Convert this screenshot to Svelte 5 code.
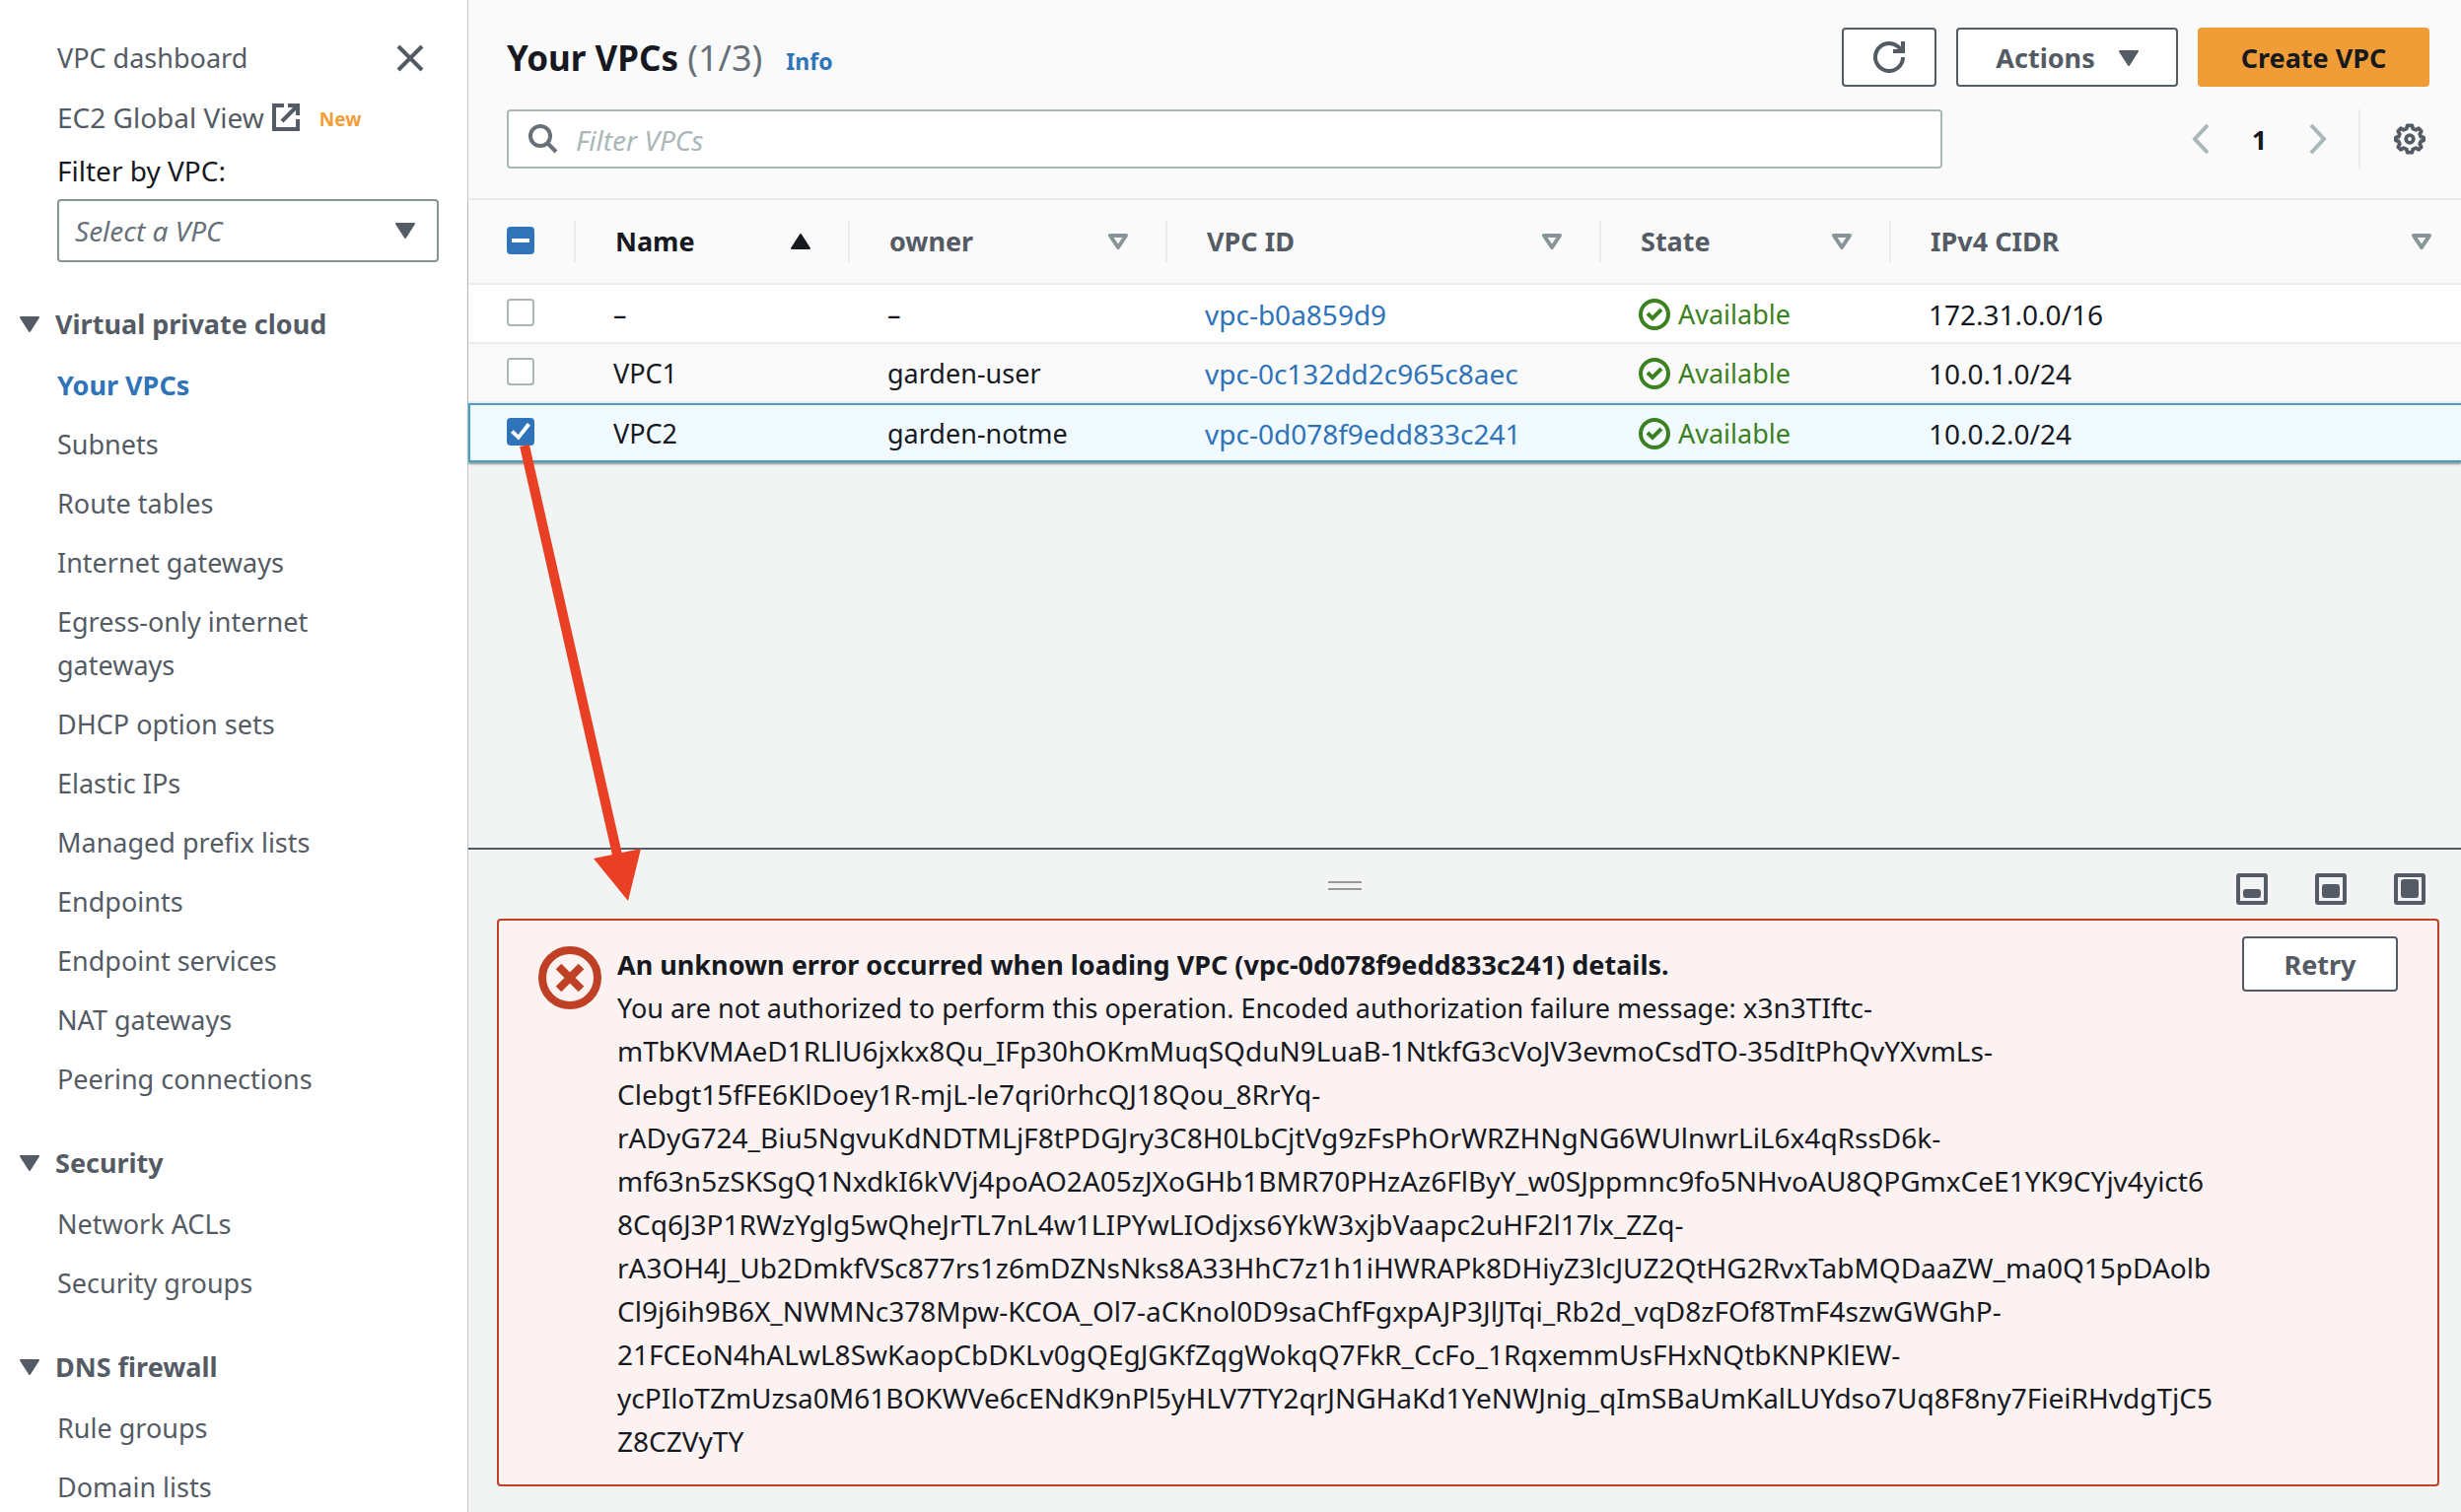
<script>
  const groups = [
    {
      title: 'Virtual private cloud',
      items: [
        'Your VPCs', 'Subnets', 'Route tables', 'Internet gateways',
        'Egress-only internet gateways', 'DHCP option sets', 'Elastic IPs',
        'Managed prefix lists', 'Endpoints', 'Endpoint services',
        'NAT gateways', 'Peering connections'
      ]
    },
    { title: 'Security', items: ['Network ACLs', 'Security groups'] },
    { title: 'DNS firewall', items: ['Rule groups', 'Domain lists'] }
  ];
  const columns = ['Name', 'owner', 'VPC ID', 'State', 'IPv4 CIDR'];
  let rows = $state([
    { name: '–', owner: '–', id: 'vpc-b0a859d9', cidr: '172.31.0.0/16', selected: false },
    { name: 'VPC1', owner: 'garden-user', id: 'vpc-0c132dd2c965c8aec', cidr: '10.0.1.0/24', selected: false },
    { name: 'VPC2', owner: 'garden-notme', id: 'vpc-0d078f9edd833c241', cidr: '10.0.2.0/24', selected: true }
  ]);
  const count = $derived(rows.filter((r) => r.selected).length);
  const encoded = [
    'x3n3TIftc-',
    'mTbKVMAeD1RLlU6jxkx8Qu_IFp30hOKmMuqSQduN9LuaB-1NtkfG3cVoJV3evmoCsdTO-35dItPhQvYXvmLs-',
    'Clebgt15fFE6KlDoey1R-mjL-le7qri0rhcQJ18Qou_8RrYq-',
    'rADyG724_Biu5NgvuKdNDTMLjF8tPDGJry3C8H0LbCjtVg9zFsPhOrWRZHNgNG6WUlnwrLiL6x4qRssD6k-',
    'mf63n5zSKSgQ1NxdkI6kVVj4poAO2A05zJXoGHb1BMR70PHzAz6FlByY_w0SJppmnc9fo5NHvoAU8QPGmxCeE1YK9CYjv4yict6',
    '8Cq6J3P1RWzYglg5wQheJrTL7nL4w1LIPYwLIOdjxs6YkW3xjbVaapc2uHF2l17lx_ZZq-',
    'rA3OH4J_Ub2DmkfVSc877rs1z6mDZNsNks8A33HhC7z1h1iHWRAPk8DHiyZ3lcJUZ2QtHG2RvxTabMQDaaZW_ma0Q15pDAolb',
    'Cl9j6ih9B6X_NWMNc378Mpw-KCOA_Ol7-aCKnol0D9saChfFgxpAJP3JlJTqi_Rb2d_vqD8zFOf8TmF4szwGWGhP-',
    '21FCEoN4hALwL8SwKaopCbDKLv0gQEgJGKfZqgWokqQ7FkR_CcFo_1RqxemmUsFHxNQtbKNPKlEW-',
    'ycPIloTZmUzsa0M61BOKWVe6cENdK9nPl5yHLV7TY2qrJNGHaKd1YeNWJnig_qImSBaUmKalLUYdso7Uq8F8ny7FieiRHvdgTjC5',
    'Z8CZVyTY'
  ];
  const sizes = [
    { label: 'Small panel', y: 16, h: 9 },
    { label: 'Medium panel', y: 11, h: 14 },
    { label: 'Full panel', y: 6, h: 19 }
  ];
</script>

{#snippet caret()}
  <svg class="caret" viewBox="0 0 20 16" aria-hidden="true"><path d="M1 1h18l-9 14z" fill="currentColor" stroke="currentColor" stroke-width="2" stroke-linejoin="round" /></svg>
{/snippet}

<div class="app">
  <nav class="sidebar" aria-label="VPC">
    <div class="top">
      <div class="line">
        <a href="#dashboard">VPC dashboard</a>
        <button class="plain close" aria-label="Close navigation">
          <svg viewBox="0 0 28 28" width="28" height="28"><path d="M2 2l24 24M26 2L2 26" stroke="currentColor" stroke-width="4" /></svg>
        </button>
      </div>
      <div class="line ext">
        <a href="#global">EC2 Global View
          <svg viewBox="0 0 28 28" width="28" height="28" aria-hidden="true"><path d="M12 2H2v24h24V16M16 2h10v10M26 2L10 18" fill="none" stroke="currentColor" stroke-width="4" /></svg>
        </a>
        <span class="new">New</span>
      </div>
      <label for="vpc-filter">Filter by VPC:</label>
      <div class="select">
        <select id="vpc-filter"><option>Select a VPC</option></select>
        {@render caret()}
      </div>
    </div>
    {#each groups as g}
      <section>
        <h2><button class="plain">{@render caret()}{g.title}</button></h2>
        <ul>
          {#each g.items as item}
            <li><a href="#{item}" class:current={item === 'Your VPCs'}>{item}</a></li>
          {/each}
        </ul>
      </section>
    {/each}
  </nav>

  <main>
    <header>
      <div class="title-row">
        <h1>Your VPCs <span>({count}/{rows.length})</span></h1>
        <a class="info" href="#info">Info</a>
        <div class="actions">
          <button class="btn refresh" aria-label="Refresh">
            <svg viewBox="0 0 32 32" width="32" height="32"><path d="M30 16A14 14 0 1 1 25 5.300L29 9" fill="none" stroke="currentColor" stroke-width="4" /><path d="M30 0v10H20" fill="none" stroke="currentColor" stroke-width="4" /></svg>
          </button>
          <button class="btn menu">Actions {@render caret()}</button>
          <button class="btn primary">Create VPC</button>
        </div>
      </div>
      <div class="tools">
        <div class="search">
          <svg viewBox="0 0 30 30" width="30" height="30" aria-hidden="true"><circle cx="12" cy="12" r="10" fill="none" stroke="currentColor" stroke-width="4" /><path d="M19 19l9 9" stroke="currentColor" stroke-width="4" /></svg>
          <input type="text" placeholder="Filter VPCs" aria-label="Filter VPCs" />
        </div>
        <div class="pager">
          <button class="plain" aria-label="Previous page"><svg viewBox="0 0 18 32" width="18" height="32"><path d="M16 2L3 16l13 14" fill="none" stroke="currentColor" stroke-width="4" /></svg></button>
          <b>1</b>
          <button class="plain" aria-label="Next page"><svg viewBox="0 0 18 32" width="18" height="32"><path d="M2 2l13 14L2 30" fill="none" stroke="currentColor" stroke-width="4" /></svg></button>
        </div>
        <button class="plain gear" aria-label="Preferences">
          <svg viewBox="-1 -1 34 34" width="32" height="32"><path d="M13.500 1.500h5l1 3.500 3 1.300 3.200-1.700 2.800 2.900-1.700 3.200 1.200 2.800 3 1v3l-3 1-1.200 2.900 1.700 3.200-2.800 2.800-3.200-1.700-3 1.300-1 3.500h-5l-1-3.500-3-1.300-3.200 1.700-2.800-2.800 1.700-3.200-1.200-2.900-3-1v-3l3-1 1.200-2.800-1.700-3.200 2.800-2.900 3.200 1.700 3-1.300z" fill="none" stroke="currentColor" stroke-width="4" stroke-linejoin="round" /><circle cx="16" cy="16" r="4" fill="none" stroke="currentColor" stroke-width="4" /></svg>
        </button>
      </div>
    </header>

    <table>
      <colgroup><col class="c0" /><col class="c1" /><col class="c2" /><col class="c3" /><col class="c4" /><col /></colgroup>
      <thead>
        <tr>
          <th><input type="checkbox" aria-label="Select all" indeterminate={count > 0} /></th>
          {#each columns as c, i}
            <th class:sorted={i === 0}>
              <div class="th">
                {c}
                {#if i === 0}
                  <svg viewBox="0 0 20 16" width="20" height="16" aria-hidden="true"><path d="M1 15h18L10 1z" fill="currentColor" stroke="currentColor" stroke-width="2" stroke-linejoin="round" /></svg>
                {:else}
                  <svg class="sort" viewBox="0 0 20 16" width="20" height="16" aria-hidden="true"><path d="M2 2h16l-8 12z" fill="none" stroke="currentColor" stroke-width="4" stroke-linejoin="round" /></svg>
                {/if}
              </div>
            </th>
          {/each}
        </tr>
      </thead>
      <tbody>
        {#each rows as r}
          <tr class:selected={r.selected}>
            <td><input type="checkbox" aria-label="Select {r.id}" bind:checked={r.selected} /></td>
            <td>{r.name}</td>
            <td>{r.owner}</td>
            <td class="code"><a href="#{r.id}">{r.id}</a></td>
            <td>
              <span class="status">
                <svg viewBox="0 0 32 32" width="32" height="32" aria-hidden="true"><circle cx="16" cy="16" r="14" fill="none" stroke="currentColor" stroke-width="4" /><path d="M9 15l5 5 9-9" fill="none" stroke="currentColor" stroke-width="4" /></svg>
                Available
              </span>
            </td>
            <td class="code">{r.cidr}</td>
          </tr>
        {/each}
      </tbody>
    </table>

    <section class="panel">
      <div class="panel-bar">
        <button class="plain handle" aria-label="Resize panel"><i></i><i></i></button>
        <div class="sizes">
          {#each sizes as s}
            <button class="plain" aria-label={s.label}>
              <svg viewBox="0 0 32 32" width="32" height="32"><rect x="2" y="2" width="28" height="28" rx="1" fill="none" stroke="currentColor" stroke-width="4" /><rect x="7" y={s.y} width="18" height={s.h} rx="3" fill="currentColor" /></svg>
            </button>
          {/each}
        </div>
      </div>
      <div class="alert" role="alert">
        <svg class="fail" viewBox="0 0 64 64" width="64" height="64" aria-hidden="true"><circle cx="32" cy="32" r="28" fill="none" stroke="currentColor" stroke-width="8" /><path d="M20.500 20.500l23 23M43.500 20.500l-23 23" stroke="currentColor" stroke-width="8" /></svg>
        <div class="text">
          <strong>An unknown error occurred when loading VPC (vpc-0d078f9edd833c241) details.</strong>
          <p>You are not authorized to perform this operation. Encoded authorization failure message: <span class="code">{#each encoded as m}{m}<br />{/each}</span></p>
        </div>
        <button class="btn retry">Retry</button>
      </div>
    </section>
  </main>

  <svg class="arrow" viewBox="0 0 120 470" width="120" height="470" aria-hidden="true"><path d="M12 4L108 428" stroke="#e94025" stroke-width="10" /><path d="M82 423l48-10-13 53z" fill="#e94025" /></svg>
</div>

<style>
  :global(body) { margin: 0; }
  .app {
    position: relative;
    display: flex;
    min-height: 100vh;
    background: #f2f3f3;
    color: #16191f;
    font: 27px/44px 'Noto Sans', 'Open Sans', sans-serif;
  }
  .app * { box-sizing: border-box; }
  a { color: inherit; text-decoration: none; }
  svg { display: block; flex: none; }
  button, input, select { font: inherit; color: inherit; }
  button { display: flex; align-items: center; justify-content: center; cursor: pointer; }
  .plain { padding: 0; border: 0; background: none; }
  .caret { width: 20px; height: 16px; }
  .code { font-size: 28px; }

  .sidebar {
    flex: none;
    width: 475px;
    padding: 37px 29px 0 20px;
    border-right: 1px solid #c4c8c8;
    background: #fff;
    color: #545b64;
  }
  .top { padding-left: 38px; }
  .line { display: flex; align-items: center; height: 44px; }
  .line a { display: flex; align-items: center; gap: 8px; }
  .close { margin: 0 15px 0 auto; }
  .ext { margin: 16px 0 10px; gap: 20px; font-size: 28px; }
  .new { color: #f29d38; font-size: 19px; font-weight: 700; padding-top: 4px; }
  .top label { display: block; color: #16191f; font-size: 28px; }
  .select { position: relative; margin-top: 7px; }
  .select select {
    display: block;
    width: 100%;
    height: 64px;
    padding: 0 16px;
    appearance: none;
    border: 2px solid #879596;
    border-radius: 4px;
    background: #fff;
    color: #687078;
    font-size: 28px;
    font-style: italic;
  }
  .select .caret { position: absolute; right: 24px; top: 24px; pointer-events: none; }
  section h2 { margin: 41px 0 18px; font-size: 27px; line-height: 44px; }
  h2 button { gap: 16px; font-weight: 700; }
  ul { display: flex; flex-direction: column; gap: 16px; margin: 0; padding: 0 0 0 38px; list-style: none; }
  li a { display: block; width: 280px; }
  .current { color: #2f73b8; font-weight: 700; }

  main { flex: 1; min-width: 0; display: flex; flex-direction: column; }
  header { padding: 28px 32px 30px 39px; background: #fafafa; border-bottom: 2px solid #eaeded; }
  .title-row { display: flex; align-items: center; height: 60px; }
  h1 { margin: 0; padding-top: 2px; font-size: 35px; line-height: 44px; }
  h1 span { color: #687078; font-size: 36px; font-weight: 400; }
  .info { margin: 8px 0 0 24px; color: #2f73b8; font-size: 23px; font-weight: 700; }
  .actions { display: flex; gap: 20px; margin-left: auto; }
  .btn {
    height: 60px;
    padding: 2px 40px 0;
    border: 2px solid #545b64;
    border-radius: 4px;
    background: #fff;
    color: #545b64;
    font-weight: 700;
  }
  .refresh { width: 96px; padding: 0; }
  .menu { width: 225px; padding: 2px 0 0; gap: 24px; }
  .primary { width: 235px; padding: 2px 0 0; border-color: #f09d38; background: #f09d38; color: #16191f; }
  .tools { display: flex; align-items: center; height: 60px; margin-top: 23px; }
  .search {
    flex: 1;
    display: flex;
    align-items: center;
    gap: 18px;
    height: 60px;
    padding: 0 20px;
    border: 2px solid #aab7b8;
    border-radius: 4px;
    background: #fff;
    color: #687078;
  }
  .search input { flex: 1; min-width: 0; padding: 2px 0 0; border: 0; outline: 0; background: none; font-size: 28px; }
  .search input::placeholder { color: #aab7b8; font-style: italic; opacity: 1; }
  .pager { display: flex; align-items: center; justify-content: space-between; width: 137px; margin: 0 32px 0 253px; color: #aab7b8; }
  .pager b { padding-top: 2px; color: #16191f; }
  .gear { height: 60px; padding: 0 4px 0 34px; border-left: 2px solid #eaeded; color: #545b64; }

  table { width: 100%; table-layout: fixed; border-collapse: separate; border-spacing: 0; box-shadow: 0 2px 2px #8d9696; }
  .c0 { width: 107px; }
  .c1 { width: 278px; }
  .c2 { width: 322px; }
  .c3 { width: 440px; }
  .c4 { width: 294px; }
  th { height: 86px; padding: 0; background: #fafafa; border-bottom: 2px solid #eaeded; color: #545b64; text-align: left; }
  .th { display: flex; align-items: center; justify-content: space-between; height: 42px; padding: 0 38px 0 40px; border-left: 2px solid #eaeded; }
  th:last-child .th { padding-right: 30px; }
  .sorted { color: #16191f; }
  .sort { color: #879596; }
  td { height: 60px; padding: 2px 0 0 40px; background: #fff; border: 0 solid #eaeded; border-bottom-width: 2px; white-space: nowrap; }
  th:first-child { padding: 0 0 2px 39px; }
  td:first-child { padding: 0 0 2px 39px; }
  tr:nth-child(2) td { background: #fafafa; }
  tr.selected td { background: #f1faff; border-color: #4a9ec4; border-top-width: 2px; }
  tr.selected td:first-child { border-left-width: 2px; padding: 0 0 2px 37px; }
  td a { color: #2f73b8; }
  .status { display: flex; align-items: center; gap: 8px; color: #3b8021; }
  input[type='checkbox'] {
    display: block;
    position: relative;
    width: 28px;
    height: 28px;
    margin: 0;
    appearance: none;
    border: 2px solid #aab7b8;
    border-radius: 4px;
    background: #fff;
  }
  input[type='checkbox']:checked, input[type='checkbox']:indeterminate { border-color: #2f73b8; background: #2f73b8; }
  input[type='checkbox']:indeterminate::before { content: ''; position: absolute; left: 3px; top: 10px; width: 18px; height: 4px; background: #fff; }
  input[type='checkbox']:checked::before {
    content: '';
    position: absolute;
    inset: 2px;
    background: #fff;
    clip-path: polygon(0 55%, 14% 41%, 38% 65%, 84% 5%, 100% 18%, 40% 92%);
  }

  .panel { margin-top: auto; padding: 0 22px 26px 29px; border-top: 2px solid #545b64; }
  .panel-bar { display: flex; align-items: center; height: 70px; margin: 0 0 0 -29px; padding-top: 10px; }
  .handle { flex: 1; flex-direction: column; gap: 5px; height: 32px; padding-bottom: 8px; }
  .handle i { width: 34px; height: 2px; background: #999; }
  .sizes { display: flex; gap: 48px; padding: 0 14px 0 16px; color: #545b64; }
  .alert {
    display: flex;
    align-items: flex-start;
    padding: 23px 40px 21px;
    border: 2px solid #bf4025;
    border-radius: 4px;
    background: #fbf2f1;
  }
  .fail { margin: 3px 16px 0 0; color: #bf4025; }
  .text { flex: 1; min-width: 0; white-space: nowrap; }
  .text strong { display: block; }
  .text p { margin: 0; }
  .text .code { line-height: 1; }
  .retry { width: 158px; height: 56px; margin-top: -7px; padding: 2px 0 0; }
  .arrow { position: absolute; left: 520px; top: 448px; overflow: visible; pointer-events: none; }
</style>
